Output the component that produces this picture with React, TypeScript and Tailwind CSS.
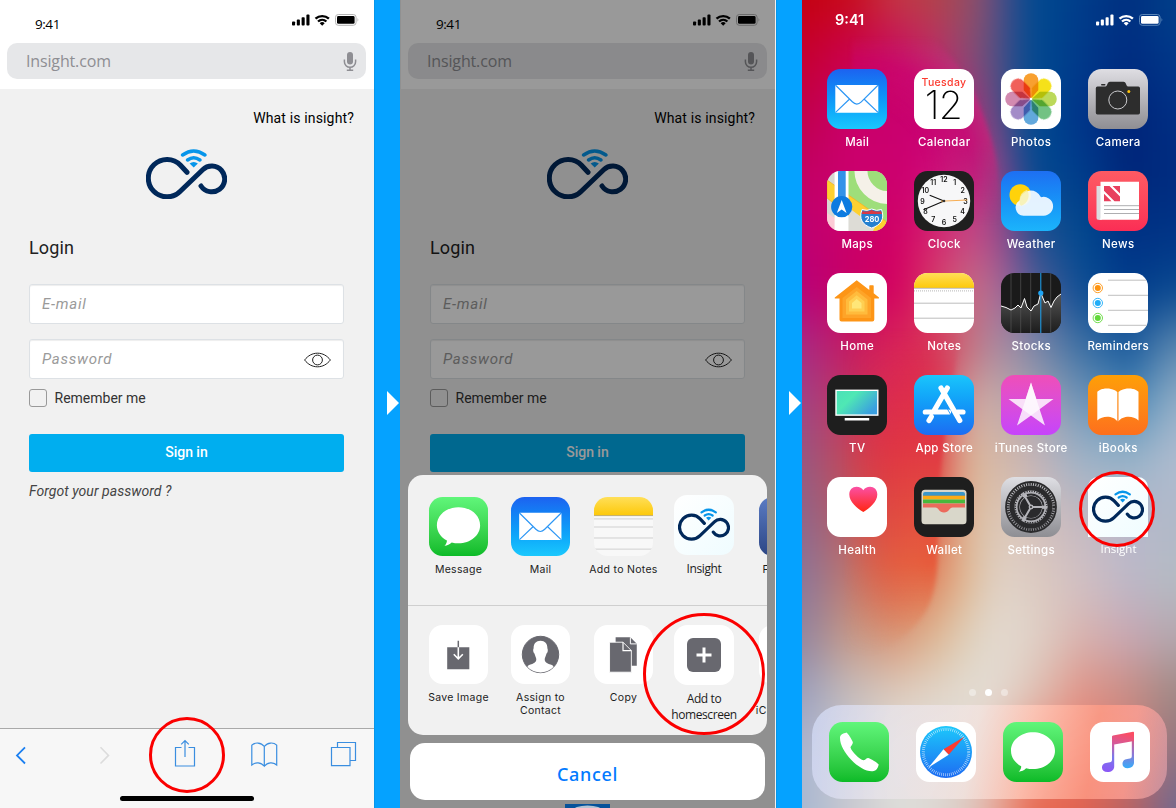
import React from "react";

type Kids = { children?: React.ReactNode };

function StatusIcons({ color, rim }: { color: string; rim: string }) {
  return (
    <svg width="67" height="14" viewBox="0 0 67 14" fill="none">
      <g fill={color}>
        <rect x="0" y="8.4" width="3.1" height="4" rx="0.9" />
        <rect x="4.8" y="6.6" width="3.1" height="5.800" rx="0.9" />
        <rect x="9.6" y="4.2" width="3.1" height="8.200" rx="0.9" />
        <rect x="14.4" y="1.6" width="3.1" height="10.800" rx="0.9" />
        <path d="M30.200 12.700 L32.700 10.200 A3.700 3.700 0 0 0 27.700 10.200 Z" />
      </g>
      <path d="M23.500 5.700 A9.800 9.800 0 0 1 36.900 5.700 M26 8.500 A6.300 6.300 0 0 1 34.400 8.500" stroke={color} strokeWidth="2.300" />
      <rect x="43.5" y="1.5" width="20.6" height="10.8" rx="2.8" stroke={rim} />
      <rect x="45" y="3" width="17.6" height="7.8" rx="1.4" fill={color} />
      <path d="M65.5 5 q1.6 1.8 0 3.8z" fill={rim} />
    </svg>
  );
}

function InsightMark({ className }: { className: string }) {
  return (
    <svg viewBox="0 0 81 50" fill="none" className={className}>
      <path
        d="M41 23.3 L34.5 16.2 A18.7 18.7 0 1 0 34.3 42.3 L56.7 20.8 A12.9 12.9 0 1 1 55 37"
        stroke="#00285a"
        strokeWidth="5"
        strokeLinecap="round"
        strokeLinejoin="round"
      />
      <path d="M36.6 6 Q47.7 -2 58.9 6 M41.6 11 Q47.7 6.6 53.9 11" stroke="#0695ea" strokeWidth="3.5" strokeLinecap="round" />
      <path d="M43.6 14.6 Q47.7 11.6 51.9 14.6 L47.7 18.6 Z" fill="#0695ea" />
    </svg>
  );
}

function LoginPage({ children }: Kids) {
  return (
    <div className="flex h-full w-[374px] flex-col bg-[#f1f1f1] font-[Roboto,sans-serif]">
      <div className="flex h-[89px] flex-none flex-col bg-white px-[7px]">
        <div className="flex h-[43px] justify-between pl-[28px] pr-[8px] pt-[13px]">
          <span className="mt-[1px] font-['Open_Sans',sans-serif] text-[13.5px] leading-5 tracking-[-0.45px] text-black">9:41</span>
          <StatusIcons color="#000" rim="#b5b5b5" />
        </div>
        <div className="flex h-9 w-[359px] items-center justify-between rounded-[10px] bg-[#e6e7e9] pl-[19px] pr-[9px]">
          <span className="font-['Open_Sans',sans-serif] text-[16px] leading-6 tracking-[-0.15px] text-[#8e8e93]">Insight.com</span>
          <svg width="14" height="21" viewBox="0 0 14 21" fill="none">
            <rect x="4" y="1" width="6" height="12.5" rx="3" fill="#8e8e93" />
            <path d="M1.4 8.5v2.2a5.6 5.6 0 0 0 11.2 0V8.5M7 16.4v3M3.8 19.2h6.4" stroke="#8e8e93" strokeWidth="1.5" />
          </svg>
        </div>
      </div>
      <div className="flex flex-1 flex-col px-[29px]">
        <div className="-mr-[9px] mt-[19px] self-end whitespace-nowrap text-sm leading-5 tracking-[0.15px] text-black">What is insight?</div>
        <InsightMark className="ml-[117px] mt-[21px] h-[50px] w-[81px]" />
        <div className="mt-[37px] text-[18px] leading-6 tracking-[0.15px] text-[#222]">Login</div>
        <div className="mt-6 flex h-10 w-[315px] items-center rounded-[3px] border border-[#dde1e5] bg-white px-3 text-[15px] italic tracking-[0.75px] text-[#9a9a9a] shadow-[inset_0_1px_1px_#eee]">
          E-mail
        </div>
        <div className="mt-[15px] flex h-10 w-[315px] items-center justify-between rounded-[3px] border border-[#dde1e5] bg-white px-3 text-[15px] italic tracking-[0.75px] text-[#9a9a9a] shadow-[inset_0_1px_1px_#eee]">
          Password
          <svg width="27" height="16" viewBox="0 0 27 16" fill="none" stroke="#222" strokeWidth="1" className="mt-[2px]">
            <path d="M.6 8C4 3.600 8.400 1.200 13.500 1.200S23 3.600 26.400 8C23 12.400 18.600 14.800 13.500 14.800S4 12.400.6 8Z" />
            <circle cx="13.500" cy="8" r="4.900" />
          </svg>
        </div>
        <div className="mt-[10px] flex h-[18px] items-center gap-2 text-sm text-[#333]">
          <span className="h-[18px] w-[18px] rounded-[3px] border border-[#999]" />
          <span className="-ml-[0.5px]">Remember me</span>
        </div>
        <div className="mt-[27px] flex h-[38px] w-[315px] flex-none items-center justify-center rounded-[3px] bg-[#00aeef] pb-[2px] text-sm font-medium tracking-[-0.05px] text-white">
          Sign in
        </div>
        <div className="mt-[9px] text-sm italic leading-5 tracking-[0.05px] text-[#444]">Forgot your password ?</div>
      </div>
      {children}
    </div>
  );
}

function Toolbar() {
  return (
    <div className="flex h-[80px] flex-none flex-col items-center border-t border-[#a9a9a9] bg-[#f7f7f7]">
      <svg width="374" height="67" viewBox="0 0 374 67" fill="none" stroke="#3a8ee0" strokeWidth="1.2">
        <path d="M25 18.300 17 26.400 25 34.500" stroke="#1b7ff0" strokeWidth="1.8" />
        <path d="M100.500 18.300 108.500 26.400 100.500 34.500" stroke="#dcdcdc" strokeWidth="1.6" />
        <path d="M181.500 18.500H175.500V37H194.500V18.500H188.500M185 28V11.500M181.200 15.300 185 11.500 188.800 15.300" />
        <path d="M264.300 17.500C261 13.200 255 13 251.800 16.200V36C255.500 32.800 261 33.300 264.300 37.200C267.600 33.300 273 32.800 276.700 36V16.200C273.500 13 267.600 13.200 264.300 17.500ZV37.500" />
        <path d="M331.500 18.500H350V36.700H331.500ZM337.500 18.500V13.500H355.500V31.500H350" />
      </svg>
      <div className="h-[5px] w-[134px] rounded-full bg-black" />
    </div>
  );
}

function Ring({ className }: { className: string }) {
  return <div className={"absolute rounded-full border-[3px] border-[#fb0000] " + className} />;
}

function BlueBar() {
  return (
    <div className="flex h-full w-[26px] flex-none items-center justify-end border-l border-[#0796ea] bg-[#05a2ff] pr-[1px]">
      <svg width="12" height="24" viewBox="0 0 12 24" className="-mt-[2px]">
        <path d="M0 0 12 12 0 24Z" fill="#fff" />
      </svg>
    </div>
  );
}

/* ---------- app icons, all on a 60 unit square ---------- */

function Tile({ children, bg, size = "h-[60px] w-[60px]", round = "rounded-[13.500px]" }: Kids & { bg: string; size?: string; round?: string }) {
  return (
    <svg viewBox="0 0 60 60" className={"flex-none overflow-hidden " + size + " " + round + " " + bg}>
      {children}
    </svg>
  );
}

const Mail = ({ size }: { size?: string }) => (
  <Tile size={size} bg="bg-linear-to-b from-[#1d62f0] to-[#1bc8fd]">
    <rect x="8.300" y="16" width="43" height="27.700" rx="1" fill="#fff" />
    <path d="M8.600 16.300 25.300 32.800Q29.800 37.400 34.300 32.800L51 16.300M8.600 43.400 22.600 30M51 43.400 37 30" fill="none" stroke="#2d97f5" strokeWidth="1.200" />
  </Tile>
);

const Calendar = () => (
  <Tile bg="bg-white">
    <text x="30" y="16.500" textAnchor="middle" fontSize="10.500" fontWeight="500" letterSpacing=".35" fill="#fb3b30" fontFamily="Inter, sans-serif">Tuesday</text>
    <text x="29.300" y="50.300" textAnchor="middle" fontSize="39" fontWeight="200" letterSpacing="-.8" fill="#000" fontFamily="Inter, sans-serif">12</text>
  </Tile>
);

const petals = ["#f8a030", "#f5e11a", "#bcd95a", "#72c283", "#62a8dc", "#a38cc8", "#d28ab0", "#f0605a"];
const Photos = () => (
  <Tile bg="bg-white">
    {petals.map((c, i) => (
      <path key={c} d="M0-.5 -7-8.500Q-7.300-9-7.300-10V-18.500A7.300 7.300 0 0 1 7.300-18.500V-10Q7.300-9 7-8.500Z" transform={`translate(30 30) rotate(${i * 45})`} fill={c} className="mix-blend-multiply" />
    ))}
    <circle cx="30" cy="30" r="1.300" fill="#fff" />
  </Tile>
);

const Camera = () => (
  <Tile bg="bg-linear-to-b from-[#dfdee3] to-[#8f8e93]">
    <path d="M9.500 17.600H17.500C19.500 17.600 19 12.800 22 12.800H35.500C38.500 12.800 38 17.600 40 17.600H50.300Q52 17.600 52 19.300V43.800Q52 45.500 50.300 45.500H9.500Q7.800 45.500 7.800 43.800V19.300Q7.800 17.600 9.500 17.600Z" fill="#2d2d2d" />
    <rect x="13" y="15" width="4.500" height="1.600" rx=".8" fill="#2d2d2d" />
    <circle cx="29.800" cy="31" r="9" fill="none" stroke="#c9c9cc" />
    <circle cx="40.800" cy="22.500" r="1.500" fill="#fdc20a" />
  </Tile>
);

const Maps = () => (
  <Tile bg="bg-[#d9d8d2]">
    <path d="M21 0H60V60H57L21 32Z" fill="#9ede7a" />
    <path d="M0 42 8 47V60H0Z" fill="#fccbd6" />
    <path d="M0 9 67 56V66H48L0 27Z" fill="#fdd030" stroke="#f0b32a" strokeWidth=".8" />
    <path d="M22 37 48 56 46 60H22Z" fill="#dddcd6" />
    <path d="M34 -2A27 27 0 0 0 62 26.500" fill="none" stroke="#f5f1e8" strokeWidth="13" />
    <path d="M7.600 0H21.500V60H7.600Z" fill="#fff" />
    <path d="M11 0H18.700V30H11Z" fill="#3292e8" />
    <circle cx="14.700" cy="35.700" r="10.600" fill="#0d7be0" />
    <path d="M14.700 29 19.600 42 14.700 38.500 9.800 42Z" fill="#fff" />
    <path d="M35 38.500Q40 40.500 44.700 38Q49.500 40.500 54.500 38.500C58 48 54 54 44.700 57C35.500 54 31.500 48 35 38.500Z" fill="#2580cf" stroke="#fff" />
    <path d="M35.500 40Q40 41.500 44.700 39Q49.500 41.500 54 40L55 43H34.600Z" fill="#d83a45" />
    <text x="45" y="51.300" textAnchor="middle" fontSize="7.500" fontWeight="700" fill="#fff" fontFamily="Inter, sans-serif">280</text>
  </Tile>
);

const hours = [1, 2, 3, 4, 5, 6, 7, 8, 9, 10, 11, 12];
const Clock = () => (
  <Tile bg="bg-[#1f1f1f]">
    <circle cx="30" cy="30" r="26.200" fill="#f7f7f8" />
    {hours.map((h) => (
      <text key={h} x={30 + 21.500 * Math.sin((h * Math.PI) / 6)} y={32.600 - 21.200 * Math.cos((h * Math.PI) / 6)} textAnchor="middle" fontSize="7" fontWeight="600" fill="#111" fontFamily="Inter, sans-serif">
        {h}
      </text>
    ))}
    <path d="M30 30 15.700 24.300M30 30 9.500 38.700" stroke="#111" strokeWidth="1.100" />
    <path d="M27 30.200 53.500 29" stroke="#f79a28" strokeWidth=".8" />
    <circle cx="30" cy="30" r="1.300" fill="#333" />
  </Tile>
);

const Weather = () => (
  <Tile bg="bg-linear-to-b from-[#1e6ff2] to-[#1cb4fb]">
    <circle cx="19.300" cy="24" r="10.800" fill="#ffd20a" />
    <path d="M22.500 44.700A8.200 8.200 0 0 1 18.600 29.500A11.200 11.200 0 0 1 40 26.300A9.400 9.400 0 1 1 42.500 44.700Z" fill="#f4faff" fillOpacity=".93" />
    <path d="M18.600 29.500A11.200 11.200 0 0 1 26 18.700A10.800 10.800 0 0 1 20 34.700Q18 33 18.600 29.500Z" fill="#f7f0a8" fillOpacity=".75" />
  </Tile>
);

const News = () => (
  <Tile bg="bg-linear-to-b from-[#fd5a63] to-[#fb2d55]">
    <path d="M8.500 15H14V48.700H10Q8.500 48.700 8.500 47Z" fill="#dcdcdf" />
    <path d="M12.500 10.700H51V47.200Q51 48.700 49.500 48.700H11Q12.500 48.500 12.500 46.500Z" fill="#fff" />
    <path d="M16 15H21.500L32 25.500V30.300H26.500L16 19.800ZM24.500 15H32V22.500ZM16 22.800 23.500 30.300H16Z" fill="#e8405e" />
    <path d="M35 34.700H51M16 34.700H35M16 38.500H51M16 42.500H51" stroke="#a5a5a8" strokeWidth=".9" />
  </Tile>
);

const HomeIcon = () => (
  <Tile bg="bg-white">
    <path d="M29.700 7.300 42.300 17V13Q42.300 12.300 43 12.300H46Q46.700 12.300 46.700 13V20.200L52 24.500Q52.400 25.300 51.500 25.500H47.300V46.500Q47.300 48.500 45.300 48.500H14.500Q12.500 48.500 12.500 46.500V25.500H8.200Q7.200 25.300 7.800 24.400Z" fill="#fd9516" />
    <path d="M29.700 14 44 25V45H15.500V25Z" fill="#fea428" />
    <path d="M29.700 18 40.500 26.500V41.500H19V26.500Z" fill="#ffbb3c" />
    <path d="M29.700 22.300 37.500 28.500V38.500H22V28.500Z" fill="#ffcf52" />
    <path d="M29.700 26 34.500 30V35.500H25V30Z" fill="#ffe678" />
  </Tile>
);

const Notes = () => (
  <Tile bg="bg-white">
    <linearGradient id="ny" x2="0" y2="1">
      <stop stopColor="#ffdf58" />
      <stop offset="1" stopColor="#fdc90b" />
    </linearGradient>
    <path d="M0 0H60V15H0Z" fill="url(#ny)" />
    <path d="M0 15.300H60M0 30.200H60M0 45.200H60" stroke="#b4b4b4" strokeWidth=".9" />
    <path d="M0 17.900H60" stroke="#a5a5a5" strokeWidth=".8" strokeDasharray="1 1" />
  </Tile>
);

const SheetNotes = () => (
  <Tile size="h-[59px] w-[59px]" bg="bg-[#f8f8f8]">
    <path d="M0 0H60V18.300H0Z" fill="url(#ny)" />
    <path d="M0 18.900H60" stroke="#c0aa60" />
    <path d="M0 22.300H60M0 30.500H60M0 41.700H60M0 53H60" stroke="#cfcfcf" />
  </Tile>
);

const Stocks = () => (
  <Tile bg="bg-[#1a1a1a]">
    <linearGradient id="sg" x2="0" y2="1">
      <stop stopColor="#555" />
      <stop offset="1" stopColor="#1c1c1c" />
    </linearGradient>
    <path d="M0 33 5 34.500 10 37 14 35 17 32 20 35 23.500 25.500 26 34 30 38 33 33 37 31 39.800 20 44 30 47 28 50 34.500 53 28 56 24 60 21V60H0Z" fill="url(#sg)" />
    <path d="M10 0V60M19.700 0V60M29.700 0V60M49.700 0V60" stroke="#555" strokeWidth=".7" />
    <path d="M0 33 5 34.500 10 37 14 35 17 32 20 35 23.500 25.500 26 34 30 38 33 33 37 31 39.800 20 44 30 47 28 50 34.500 53 28 56 24 60 21" fill="none" stroke="#fff" />
    <path d="M39.800 0V60" stroke="#1ea5f5" />
    <circle cx="39.800" cy="20" r="2.600" fill="#1ea5f5" />
  </Tile>
);

const Reminders = () => (
  <Tile bg="bg-white">
    {["#fd9411", "#1fadf8", "#62d83a"].map((c, i) => (
      <g key={c}>
        <circle cx="9.800" cy={15 + i * 15} r="4.700" fill="none" stroke={c} strokeWidth=".9" />
        <circle cx="9.800" cy={15 + i * 15} r="3" fill={c} />
      </g>
    ))}
    <path d="M20 7.200H60M20 22.300H60M20 37.300H60M20 52.300H60" stroke="#b9b9b9" strokeWidth=".9" />
  </Tile>
);

const Tv = () => (
  <Tile bg="bg-[#1e1e1e]">
    <linearGradient id="tv" x2="1" y2=".6">
      <stop stopColor="#4be0b8" />
      <stop offset=".4" stopColor="#4fe8b4" />
      <stop offset="1" stopColor="#3a9fe0" />
    </linearGradient>
    <rect x="9" y="15.300" width="41.800" height="24.800" fill="url(#tv)" stroke="#fff" strokeWidth="1.400" />
    <rect x="17.700" y="43" width="24.500" height="2.500" fill="#fff" />
  </Tile>
);

const AppStore = () => (
  <Tile bg="bg-linear-to-b from-[#1bc5fb] to-[#1d6cf2]">
    <path d="M33.300 13 20.500 35M17.300 41.800 15 45.600M11.300 37H34.500M43.500 37H49M27 13 45.800 45.600" fill="none" stroke="#fff" strokeWidth="5.200" strokeLinecap="round" />
    <path d="M32.600 25.500 40.500 39.200" stroke="#1e93f7" strokeWidth=".9" transform="translate(-3.200 1.500)" />
  </Tile>
);

const ITunes = () => (
  <Tile bg="bg-linear-to-b from-[#ef4eb8] to-[#c643fb]">
    <path d="M30 7.500 35.300 24H52.500L38.600 34.200 44 50.500 30 40.400 16 50.500 21.400 34.200 7.500 24H24.700Z" fill="#fff" fillOpacity=".82" />
    <path d="M30 7.500 38.600 34.200 30 40.400 21.400 34.200Z" fill="#fff" fillOpacity=".7" />
  </Tile>
);

const IBooks = () => (
  <Tile bg="bg-linear-to-b from-[#fe9f06] to-[#fd6f1c]">
    <path d="M29.300 46.500C26 41 15 40 9.300 45.500V16.800C13 12.300 25 12.300 29.300 17ZM30.500 46.500C33.800 41 44.800 40 50.500 45.500V16.800C46.800 12.300 34.800 12.300 30.500 17Z" fill="#fff" />
  </Tile>
);

const Health = () => (
  <Tile bg="bg-white">
    <linearGradient id="he" x2="0" y2="1">
      <stop stopColor="#fb50a5" />
      <stop offset="1" stopColor="#ff2612" />
    </linearGradient>
    <path d="M36.300 35C30 31 22.300 25 22.300 17.500C22.300 12.500 25.500 9.700 29.500 9.700C32.500 9.700 35 11 36.300 13.300C37.600 11 40.100 9.700 43.100 9.700C47.100 9.700 50.300 12.500 50.300 17.500C50.300 25 42.600 31 36.300 35Z" fill="url(#he)" />
  </Tile>
);

const Wallet = () => (
  <Tile bg="bg-[#1e1e1e]">
    <rect x="7.500" y="12.800" width="45" height="34.500" rx="3.500" fill="#d9d7ca" />
    <path d="M9 18.500V17Q9 15 11 15H49Q51 15 51 17V18.500Z" fill="#3a97c9" />
    <path d="M9 18.500H51V22.500H9Z" fill="#fcab14" />
    <path d="M9 18.500H51" stroke="#2c78a8" strokeWidth=".5" />
    <path d="M9 22.500H51V26.500H9Z" fill="#49b83c" />
    <path d="M9 26.500H51V30.500H38.500C35.500 30.500 35 35.500 30 35.500S24.500 30.500 21.500 30.500H9Z" fill="#ec6a5c" />
  </Tile>
);

const Settings = () => (
  <Tile bg="bg-linear-to-b from-[#dfdfe4] to-[#8e8e93]">
    <g fill="none" stroke="#2a2a2c">
      <circle cx="30" cy="30" r="25" strokeWidth="1.800" />
      <circle cx="30" cy="30" r="22.800" strokeWidth="2.800" strokeDasharray="1.500 .887" />
      <circle cx="30" cy="30" r="19" strokeWidth="5" />
      <circle cx="30" cy="30" r="12.800" strokeWidth="2.400" strokeDasharray="22.800 4.007" strokeDashoffset="-2" />
      <circle cx="30" cy="30" r="15.600" strokeWidth="1.800" strokeDasharray="1.200 1.250" />
      <circle cx="30" cy="30" r="6.500" strokeWidth="9" />
    </g>
    <circle cx="30" cy="30" r="14.300" fill="none" stroke="#aeaeb3" strokeWidth="1.600" />
    <path d="M30 30H46.500M30 30 21.750 15.700M30 30 21.750 44.300" stroke="#b4b4b9" strokeWidth="2" />
    <circle cx="30" cy="30" r="2.400" fill="#b4b4b9" />
    <circle cx="30" cy="30" r="1.100" fill="#333" />
  </Tile>
);

const Message = ({ size }: { size?: string }) => (
  <Tile size={size} bg="bg-linear-to-b from-[#60f67a] to-[#0abb27]">
    <path d="M30 10.300C42.200 10.300 52 18.500 52 28.700S42.200 47.100 30 47.100C27.600 47.100 25.300 46.800 23.100 46.200C21 48.300 18.500 49.300 15.700 49.700C17.500 48 18.300 46 18.200 44.200C12 40.900 8 35.200 8 28.700C8 18.500 17.800 10.300 30 10.300Z" fill="#fff" />
  </Tile>
);

const Phone = () => (
  <Tile bg="bg-linear-to-b from-[#60f67a] to-[#0abb27]">
    <path d="M11 16C11 12.500 14 11.500 17.500 10.500C19.500 12 22.500 17 23.800 20C24.300 22 21.500 24.500 21.500 25.500C22.500 29.500 30.500 37.500 34.500 38.300C36 38.300 37.500 35.800 39.300 36C42.500 37 48 40.500 49.700 42.500C49 46 47.500 49 43.500 49.300C31 50 11 30 11 16Z" fill="#fff" />
  </Tile>
);

const Safari = () => (
  <Tile bg="bg-white">
    <linearGradient id="sf" x2="0" y2="1">
      <stop stopColor="#1cc8fb" />
      <stop offset="1" stopColor="#1d6cf2" />
    </linearGradient>
    <circle cx="30" cy="30" r="26" fill="url(#sf)" />
    <circle cx="30" cy="30" r="22.700" fill="none" stroke="#fff" strokeOpacity=".8" strokeWidth="3" strokeDasharray=".6 1.381" />
    <path d="M48.300 14.800 27.500 27.300 32.700 32.700Z" fill="#fc3b31" />
    <path d="M12.500 45.500 27.500 27.300 32.700 32.700Z" fill="#fff" />
  </Tile>
);

const Music = () => (
  <Tile bg="bg-white">
    <linearGradient id="mu" x1=".6" y1="0" x2=".4" y2="1">
      <stop stopColor="#fb4d63" />
      <stop offset=".35" stopColor="#d05ba0" />
      <stop offset=".65" stopColor="#7a78ea" />
      <stop offset="1" stopColor="#8a5af5" />
    </linearGradient>
    <linearGradient id="mr" x2="0" y2="1">
      <stop stopColor="#d05c90" />
      <stop offset=".5" stopColor="#8a78d8" />
      <stop offset="1" stopColor="#35adfa" />
    </linearGradient>
    <path d="M22 14.500Q22 13.600 23 13.400L43 9.700Q44 9.500 44 10.500V19L24.200 22.600V44.500C24.200 48 21.500 50 17.500 50C14 50 12 48.200 12 45.700C12 42 15 40.700 18.500 40.500C21 40.300 22 39.800 22 37.500Z" fill="url(#mu)" />
    <path d="M41.800 19H44V40.500C44 44 41.300 46.200 37.700 46.200C34.400 46.200 32.500 44.400 32.500 42C32.500 38.500 35.200 37 38.500 36.800C41 36.600 41.800 36 41.800 34Z" fill="url(#mr)" />
  </Tile>
);

const InsightTile = ({ corner }: { corner: string }) => (
  <div className={"flex h-[60px] w-[60px] items-center justify-center bg-linear-to-br from-white to-[#effcff] " + corner}>
    <InsightMark className="-mt-[2px] h-[33px] w-[52px]" />
  </div>
);

/* ---------- share sheet ---------- */

function SheetItem({ width, label, children, text = "font-[Inter,sans-serif] text-[10.500px] leading-[12.500px] tracking-[0.300px] mt-[8px]" }: Kids & { width: string; label: string; text?: string }) {
  return (
    <div className={"flex flex-none flex-col items-center " + width}>
      {children}
      <span className={"whitespace-pre text-center text-[#1c1c1c] " + text}>{label}</span>
    </div>
  );
}

const small = "h-[59px] w-[59px]";
const insightText = "font-['Open_Sans',sans-serif] text-[12px] leading-4 tracking-[-0.400px]";

function ShareSheet() {
  return (
    <div className="absolute left-2 top-[475px] flex w-[359px] flex-col items-center">
      <div className="flex h-[260px] w-full flex-col overflow-hidden rounded-[15px] bg-[#f1f1f1]">
        <div className="flex h-[131px] flex-none items-start border-b border-[#cfcfcf] pl-[9.500px] pt-[22px]">
          <SheetItem width="w-[82px]" label="Message"><Message size={small} /></SheetItem>
          <SheetItem width="w-[82px]" label="Mail"><Mail size={small} /></SheetItem>
          <SheetItem width="w-[84px]" label="Add to Notes"><SheetNotes /></SheetItem>
          <SheetItem width="w-[77px] -mt-[2px]" label="Insight" text={insightText + " mt-[6px]"}><InsightTile corner="rounded-[13px]" /></SheetItem>
          <SheetItem width="w-[91px]" label="Facebook"><Tile size={small} bg="bg-linear-to-b from-[#5b7cc4] to-[#2c4685]" /></SheetItem>
        </div>
        <div className="flex items-start pl-[9.500px] pt-[19px]">
          <SheetItem width="w-[82px]" label="Save Image">
            <Tile size={small} bg="bg-white">
              <path d="M18.500 22.500H41V45H18.500Z" fill="#68686f" />
              <path d="M29.800 16V22.500" stroke="#68686f" strokeWidth="1.500" />
              <path d="M29.800 22.500V34M25.200 29.800 29.800 34.400 34.400 29.800" fill="none" stroke="#fff" strokeWidth="1.600" />
            </Tile>
          </SheetItem>
          <SheetItem width="w-[82px]" label={"Assign to\nContact"}>
            <Tile size={small} bg="bg-white">
              <circle cx="30" cy="30" r="18.500" fill="#68686f" stroke="#68686f" />
              <path d="M30 16C34.500 16 37 19 37 23.500C37 24.500 37.800 25 37.300 27C37 28.500 36.200 28.500 35.800 30C35.300 32 34.500 33 34.300 34.500C34.200 38 36 38.500 41 40.500Q43.500 41.500 43.200 42.700A18.300 18.300 0 0 1 16.800 42.700Q16.500 41.500 19 40.500C24 38.500 25.800 38 25.700 34.500C25.500 33 24.700 32 24.200 30C23.800 28.500 23 28.500 22.700 27C22.200 25 23 24.500 23 23.500C23 19 25.500 16 30 16Z" fill="#fff" />
            </Tile>
          </SheetItem>
          <SheetItem width="w-[84px]" label="Copy">
            <Tile size={small} bg="bg-white">
              <path d="M22 12.500H37L43.500 19V41.500H22Z" fill="#68686f" />
              <path d="M37 12.500V19.200H43.500" fill="none" stroke="#fff" />
              <path d="M15.800 17.500H29.500L38 26V48H15.800Z" fill="#68686f" stroke="#fff" strokeWidth=".9" />
              <path d="M29.500 17.500V26H38" fill="none" stroke="#fff" strokeWidth="1.200" />
            </Tile>
          </SheetItem>
          <SheetItem width="w-[77px]" label={"Add to\nhomescreen"} text={insightText + " mt-[6px]"}>
            <Tile bg="bg-white">
              <rect x="13" y="13" width="34" height="34" rx="6" fill="#68686f" />
              <path d="M30 22.500V37.500M22.500 30H37.500" stroke="#fff" strokeWidth="3" />
            </Tile>
          </SheetItem>
          <SheetItem width="w-[91px]" label={"\niCloud Drive"}><Tile size={small} bg="bg-white" /></SheetItem>
        </div>
      </div>
      <div className="mt-2 flex h-[57px] w-[355px] items-center justify-center rounded-[15px] bg-white pt-[5px] font-['Noto_Sans',sans-serif] text-[18px] font-medium tracking-[0.700px] text-[#027aff]">
        Cancel
      </div>
      <svg width="45" height="4" viewBox="0 0 45 4" className="mt-1">
        <path d="M0 0H45V4H0Z" fill="#06529a" />
        <ellipse cx="22.500" cy="7" rx="15" ry="5.500" fill="#b5c4d3" />
      </svg>
    </div>
  );
}

/* ---------- home screen ---------- */

const stops = [0, 47, 94, 130, 165, 187, 210, 234, 280, 327, 374];
const rows = [
  "c40010 c80c1c c43644 b44248 984c62 70507c 2c4c8c 004a90 003c8a 003080 00408a",
  "c60030 ca0050 c80862 c02868 8c4a72 64507e 2c4c8c 004a90 00398a 002c80 00388a",
  "c0004c c90068 c9006e c80072 b02878 78487e 28508c 004a90 00348a 002479 002f84",
  "c20064 cc006e cc006e ce0878 c42c80 a84086 4a4a8c 024a90 003c8b 002579 002c80",
  "c00070 ca006a d00066 d42270 c84280 b04688 744c8c 205090 00498f 003084 003486",
  "b80078 c80064 d40060 d63864 c86880 b86c90 8c6098 505c94 0c4d94 003c8b 084890",
  "a82a84 c41c62 d82458 d83458 c86c7a b08498 9c8ca4 7c88a8 3c70a4 1a5a9c 5c88b0",
  "a04484 c43460 de2850 dc3048 cca09c ccaea8 bca8ac a8a4b0 7498ba 4c8ab8 94b0c8",
  "985880 c44858 e03040 e03c3e dcb090 d8b8a4 d0b8ac c4b4b8 a0b4c8 98b4c8 b0bcd0",
  "906488 b85c64 de4440 e06048 ddb898 dcc4ae dcc8bc d4c0bc c4b8c0 b8b8cc b0b8c8",
  "8c7498 bc7870 e06048 e08860 deb894 e0ccba dfd0c6 dccac0 d0c0c4 bcb8c8 b4bcc4",
  "94849c c49888 d89878 dcb490 dfceb8 e2d8cc e2d8ce dfd0c6 d8b4b0 c8a8b4 b4a8b0",
  "9ca0bc c4bcbc dccabc e0d4c8 e2dcd2 e3dcd4 e2d2c8 dec0b4 e09488 c88c84 a08884",
  "acb4d0 c8c8d0 e2e0dc e2dfdb e4d8d0 e8c8bc e8a898 ea8c7c ec7c6c cc7c78 907480",
  "a8b8d0 c8c8d0 dcdcd8 dcd8d4 dcc8c0 e4b0a4 e88c78 e86850 e0604e b86060 706890",
].map((r) => r.split(" "));

function Wallpaper() {
  return (
    <svg width="374" height="808" viewBox="0 0 374 808" className="absolute inset-0">
      <defs>
        {rows.map((r, i) => (
          <linearGradient key={i} id={"w" + i} gradientUnits="userSpaceOnUse" x1="0" x2="374">
            {r.map((c, j) => (
              <stop key={j} offset={stops[j] / 374} stopColor={"#" + c} />
            ))}
          </linearGradient>
        ))}
        <filter id="soft" filterUnits="userSpaceOnUse" x="-80" y="-80" width="534" height="968" colorInterpolationFilters="sRGB">
          <feGaussianBlur stdDeviation="12 25" />
        </filter>
        <filter id="edge" filterUnits="userSpaceOnUse" x="-80" y="-80" width="534" height="968" colorInterpolationFilters="sRGB">
          <feGaussianBlur stdDeviation="2.200" />
        </filter>
        <radialGradient id="e1" gradientUnits="userSpaceOnUse" cx="50" cy="180" r="152">
          <stop offset=".5" stopColor="#cc0070" stopOpacity="0" />
          <stop offset=".8" stopColor="#cc0474" stopOpacity=".85" />
          <stop offset="1" stopColor="#c82c7c" stopOpacity=".85" />
        </radialGradient>
        <linearGradient id="f1" gradientUnits="userSpaceOnUse" x1="0" y1="36" x2="0" y2="225">
          <stop stopColor="#000" />
          <stop offset=".25" stopColor="#ddd" />
          <stop offset=".55" stopColor="#ddd" />
          <stop offset="1" stopColor="#000" />
        </linearGradient>
        <mask id="m1"><path d="M0 0H374V808H0Z" fill="url(#f1)" /></mask>
        <linearGradient id="e2" gradientUnits="userSpaceOnUse" x1="0" y1="330" x2="0" y2="655">
          <stop stopColor="#dc2850" stopOpacity="0" />
          <stop offset=".35" stopColor="#e03844" />
          <stop offset=".72" stopColor="#e65c3c" />
          <stop offset="1" stopColor="#e08858" stopOpacity="0" />
        </linearGradient>
        <linearGradient id="e3" gradientUnits="userSpaceOnUse" x1="40" y1="0" x2="125" y2="0">
          <stop stopColor="#000" />
          <stop offset="1" stopColor="#fff" />
        </linearGradient>
        <mask id="m3"><path d="M0 0H374V808H0Z" fill="url(#e3)" /></mask>
      </defs>
      <g filter="url(#soft)">
        {rows.map((_, i) => (
          <rect key={i} x="-80" y={i === 0 ? -80 : i * 57.700 - 28.850} width="534" height={i === 0 ? 110 : i === 14 ? 120 : 58.500} fill={`url(#w${i})`} />
        ))}
      </g>
      <g mask="url(#m1)">
        <path d="M50 20H110C135 38 156 62 171 90C184 120 192 145 195 165C198 190 198 210 196 240H50Z" fill="url(#e1)" filter="url(#edge)" />
      </g>
      <g mask="url(#m3)">
        <path d="M40 330H158C152 380 143 430 139 465C134 520 138 560 133 585C127 615 112 640 40 670Z" fill="url(#e2)" filter="url(#edge)" />
      </g>
    </svg>
  );
}

const apps: [string, React.ReactNode][] = [
  ["Mail", <Mail />], ["Calendar", <Calendar />], ["Photos", <Photos />], ["Camera", <Camera />],
  ["Maps", <Maps />], ["Clock", <Clock />], ["Weather", <Weather />], ["News", <News />],
  ["Home", <HomeIcon />], ["Notes", <Notes />], ["Stocks", <Stocks />], ["Reminders", <Reminders />],
  ["TV", <Tv />], ["App Store", <AppStore />], ["iTunes Store", <ITunes />], ["iBooks", <IBooks />],
  ["Health", <Health />], ["Wallet", <Wallet />], ["Settings", <Settings />], ["Insight", <InsightTile corner="rounded-t-[10px]" />],
];

function HomeScreen() {
  return (
    <div className="relative h-full w-[374px] flex-none overflow-hidden">
      <Wallpaper />
      <div className="relative flex h-full flex-col font-[Inter,sans-serif] text-white">
        <div className="flex h-[69px] flex-none justify-between pl-[33px] pr-[13px] pt-[13px]">
          <span className="-mt-[3px] text-[14.500px] font-semibold leading-5">9:41</span>
          <StatusIcons color="#fff" rim="#5a86b8" />
        </div>
        <div className="grid auto-rows-[102px] grid-cols-[repeat(4,87px)] pl-[11px]">
          {apps.map(([name, icon]) => (
            <div key={name} className="flex flex-col items-center whitespace-nowrap">
              {icon}
              {name === "Insight" ? (
                <span className="ml-[2px] mt-[4px] font-['Open_Sans',sans-serif] text-[11.500px] leading-4">{name}</span>
              ) : (
                <span className="ml-[1.500px] mt-[5px] text-[11.500px] font-medium leading-4 tracking-[0.350px]">{name}</span>
              )}
            </div>
          ))}
        </div>
        <div className="mr-[2px] mt-[110px] flex justify-center gap-[9px]">
          <span className="h-[7px] w-[7px] rounded-full bg-white/40" />
          <span className="h-[7px] w-[7px] rounded-full bg-white" />
          <span className="h-[7px] w-[7px] rounded-full bg-white/40" />
        </div>
        <div className="ml-[10px] mt-[9px] flex h-[94px] w-[355px] gap-[27px] rounded-[30px] bg-[linear-gradient(100deg,#d0d8f4cc_0%,#e8e4eacc_22%,#f2e4e0cc_45%,#ffc8b8cc_60%,#ff9c86cc_78%,#ffa094cc_88%,#dca0acb0_100%)] px-[17px] pt-[17px]">
          <Phone />
          <Safari />
          <Message />
          <Music />
        </div>
      </div>
      <Ring className="left-[277px] top-[471px] h-[76px] w-[76px]" />
    </div>
  );
}

export default function App() {
  return (
    <div className="flex h-[808px] w-[1176px] overflow-hidden">
      <div className="relative h-full w-[374px] flex-none">
        <LoginPage>
          <Toolbar />
        </LoginPage>
        <Ring className="left-[149px] top-[717px] h-[76px] w-[76px]" />
      </div>
      <BlueBar />
      <div className="relative h-full w-[376px] flex-none overflow-hidden bg-[#f1f1f1] pl-[1px]">
        <LoginPage />
        <div className="absolute inset-y-0 left-0 right-[1px] bg-black/40" />
        <ShareSheet />
        <Ring className="left-[243px] top-[613px] h-[122px] w-[122px]" />
      </div>
      <BlueBar />
      <HomeScreen />
    </div>
  );
}
